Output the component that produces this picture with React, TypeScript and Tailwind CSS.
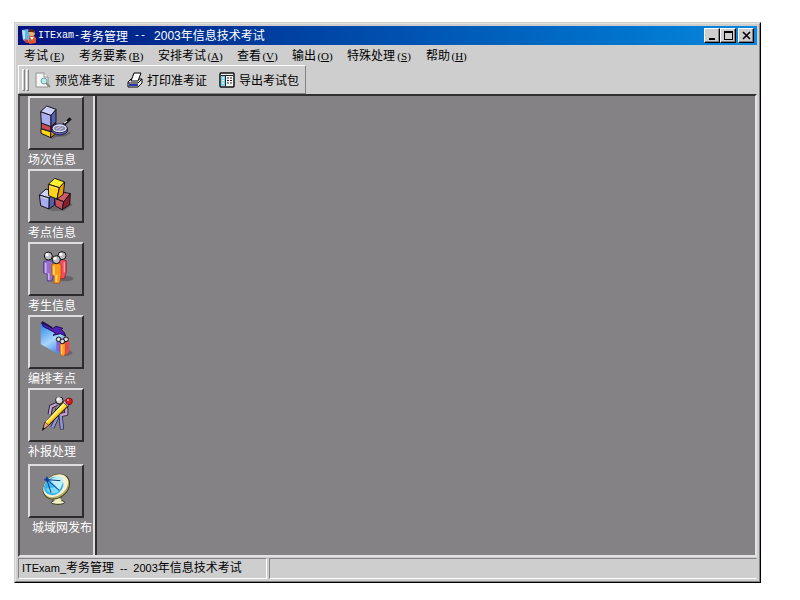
import React from 'react';

interface MenuEntry {
  label: string;
  hotkey: string;
}

interface IconProps {
  className?: string;
}

const menus: MenuEntry[] = [
  { label: '考试', hotkey: 'E' },
  { label: '考务要素', hotkey: 'B' },
  { label: '安排考试', hotkey: 'A' },
  { label: '查看', hotkey: 'V' },
  { label: '输出', hotkey: 'O' },
  { label: '特殊处理', hotkey: 'S' },
  { label: '帮助', hotkey: 'H' },
];

const AppIcon: React.FC<IconProps> = ({ className }) => (
  <svg className={className} viewBox="0 0 16 16" aria-hidden="true">
    <path d="M1 2l6-1 3 4v8l-4 2-4-3z" fill="#5fb4e8" />
    <path d="M1 2l3 1v9l-2-1z" fill="#b9e4fa" />
    <path d="M8 8l4-1 3 3v5l-7 1z" fill="#e0562a" />
    <path d="M3 11l4 1 1 3H5z" fill="#c9403a" />
    <circle cx="11" cy="5" r="3" fill="#f1b06a" />
    <path d="M7 4c0-4 7-4 7 1l-3-1z" fill="#5a2a12" />
    <path d="M9 9l2 3 2-3" fill="#fff" />
  </svg>
);

const PreviewIcon: React.FC<IconProps> = ({ className }) => (
  <svg className={className} viewBox="0 0 16 16" aria-hidden="true">
    <path d="M1 1h8l4 4v10H1z" fill="#f6f6f6" stroke="#909090" />
    <path d="M9 1v4h4" fill="#fff" stroke="#909090" />
    <circle cx="9" cy="9" r="3" fill="#b4eef2" stroke="#7a9a9c" />
    <path d="M11 11l4 4" stroke="#888" strokeWidth="2" />
  </svg>
);

const PrintIcon: React.FC<IconProps> = ({ className }) => (
  <svg className={className} viewBox="0 0 16 16" aria-hidden="true">
    <path d="M1 10l3-3h11v4l-4 4H1z" fill="#f0f0f0" stroke="#000" />
    <path d="M4 9l3-8h7l-3 8z" fill="#fff" stroke="#000" />
    <path d="M1 11h10l4-4" fill="none" stroke="#000" />
    <path d="M2 13h9" stroke="#2a34b0" strokeWidth="2" />
  </svg>
);

const ExportIcon: React.FC<IconProps> = ({ className }) => (
  <svg className={className} viewBox="0 0 16 16" aria-hidden="true">
    <rect x="1" y="1" width="14" height="14" rx="1" fill="#f4f4f4" stroke="#111" strokeWidth="1.500" />
    <path d="M2 3h4v11h-4z" fill="#77d5e8" />
    <path d="M6.500 3v11M2 3.500h12" stroke="#222" />
    <path d="M3 6h2M3 8.500h2M3 11h2" stroke="#fff" />
    <path d="M8 6h2M11 6h2M8 8.500h2M11 8.500h2M8 11h2M11 11h2" stroke="#222" />
  </svg>
);

const SessionIcon: React.FC<IconProps> = ({ className }) => (
  <svg className={className} viewBox="36 33 108 108" aria-hidden="true">
    <path d="M74 131l16-8 28-2 12-8 6 4-18 10-28 2-12 6z" fill="#646264" />
    <g stroke="#14141c" strokeWidth="3" strokeLinejoin="round">
      <path d="M45 104l29 9v18l-29-13z" fill="#ffd414" />
      <path d="M74 113l14-9v17l-14 10z" fill="#d08c00" />
      <path d="M46 86l29 11v16l-29-9z" fill="#c84a52" />
      <path d="M75 97l15-11v17l-15 10z" fill="#8c1c2c" />
      <path d="M44 53l31 11v34l-29-11z" fill="#a9aef0" />
      <path d="M75 64l15-18v38l-15 14z" fill="#5a60b0" />
      <path d="M44 53l18-17 28 10-15 18z" fill="#ccd0fa" />
    </g>
    <path d="M112 93l22-20" stroke="#111" strokeWidth="9" />
    <path d="M114 88l9-7" stroke="#d8d8ec" strokeWidth="4" />
    <ellipse cx="101" cy="108" rx="24" ry="15" fill="#686ca8" stroke="#14144c" strokeWidth="3" />
    <ellipse cx="101" cy="103" rx="23" ry="13" fill="#848284" stroke="#14144c" strokeWidth="3" />
    <ellipse cx="101" cy="103" rx="19" ry="10" fill="#8c8ca0" stroke="#dcdcfc" strokeWidth="4" />
    <path d="M90 105l14-8M97 109l14-8" stroke="#c8caf0" strokeWidth="3" />
  </svg>
);

const SiteIcon: React.FC<IconProps> = ({ className }) => (
  <svg className={className} viewBox="36 33 108 108" aria-hidden="true">
    <path d="M70 127l20-14 18 14 26-18 6 4-26 18H88l-8 2z" fill="#686668" />
    <g stroke="#14141c" strokeWidth="3" strokeLinejoin="round">
      <path d="M40 84l20-18 26 10-16 17z" fill="#ced2fa" />
      <path d="M40 84l30 9-1 33-25-10z" fill="#a7acec" />
      <path d="M70 93l16-17v38l-17 12z" fill="#565ca8" />
      <path d="M86 94l20-20 27 6-20 24z" fill="#d05c64" />
      <path d="M86 94l27 10-4 24-21-11z" fill="#c2505a" />
      <path d="M113 104l20-24-2 33-22 15z" fill="#8c1c28" />
      <path d="M67 52l19-18 30 11-16 17z" fill="#fff02c" />
      <path d="M67 52l33 10-7 34-25-10z" fill="#ffd21c" />
      <path d="M100 62l16-17-4 37-19 14z" fill="#e89c00" />
    </g>
    <path d="M72 58l24 7M46 90l20 6" stroke="#fff7c4" strokeWidth="3" opacity="0.6" />
  </svg>
);

const CandidateIcon: React.FC<IconProps> = ({ className }) => (
  <svg className={className} viewBox="72 46 108 108" aria-hidden="true">
    <ellipse cx="154" cy="129" rx="24" ry="8" fill="#646264" />
    <path d="M89 78q14-9 28 0v46l-3 12h-14v-20l-11-4z" fill="#9470cc" stroke="#3c2372" strokeWidth="2" />
    <path d="M95 82v31M104 113v20" stroke="#c8b2ec" strokeWidth="5" />
    <path d="M133 75q13-7 24 0v34l-6 20h-13z" fill="#f04c64" stroke="#88182c" strokeWidth="2" />
    <path d="M151 80v30" stroke="#ffa0a4" strokeWidth="4" />
    <path d="M113 86q14-9 28 0v34l-4 23h-17v-22l-7-3z" fill="#ff9a16" stroke="#a34310" strokeWidth="2" />
    <path d="M120 91v26M127 117v22" stroke="#ffd26c" strokeWidth="6" />
    <g fill="#bdbdc1" stroke="#111" strokeWidth="3">
      <circle cx="103" cy="61" r="12" />
      <circle cx="144" cy="60" r="12" />
      <circle cx="127" cy="72" r="12" />
    </g>
    <g fill="#fff">
      <circle cx="99" cy="57" r="5" />
      <circle cx="140" cy="56" r="5" />
      <circle cx="123" cy="68" r="5" />
    </g>
  </svg>
);

const ArrangeIcon: React.FC<IconProps> = ({ className }) => (
  <svg className={className} viewBox="36 33 108 108" overflow="visible" aria-hidden="true">
    <defs>
      <linearGradient id="folder" x1="0" y1="0" x2="0.5" y2="1">
        <stop offset="0" stopColor="#2a84ec" />
        <stop offset="0.6" stopColor="#a8d6fc" />
        <stop offset="1" stopColor="#4a90ec" />
      </linearGradient>
    </defs>
    <path d="M112 128l20-16 8 8-14 9z" fill="#646264" />
    <path d="M44 33l70 30-7 65-63-34z" fill="url(#folder)" />
    <path d="M44 30l6-5 30 18-3 5-25-11z" fill="#14104c" />
    <path d="M50 30l30 17 10-7 20 6-4 4 9 9 4 10-16-7-22 5 8-7-38-20z" fill="#5020b8" stroke="#180c50" strokeWidth="3" strokeLinejoin="round" />
    <path d="M91 86q6-4 12 0v33l-12-6z" fill="#8c60d4" />
    <path d="M117 87q8-5 13 0v28l-6 10-7-4z" fill="#e84650" />
    <path d="M102 92q7-5 16 0v28l-3 9h-9l-4-8z" fill="#ff9a2c" stroke="#b05014" strokeWidth="2" />
    <path d="M107 96v26" stroke="#ffd06a" strokeWidth="4" />
    <g fill="#dcdce0" stroke="#111" strokeWidth="3">
      <circle cx="98" cy="79" r="7" />
      <circle cx="120" cy="79" r="7" />
      <circle cx="109" cy="85" r="7" />
    </g>
  </svg>
);

const SupplementIcon: React.FC<IconProps> = ({ className }) => (
  <svg className={className} viewBox="72 49 108 108" aria-hidden="true">
    <g strokeLinejoin="round" fill="none">
      <path d="M128 70l-17 8-4 23M129 83v28l-14 30M140 105l4 41M135 76l22 8v16l-20 3" stroke="#15152c" strokeWidth="12" />
      <path d="M128 70l-17 8-4 23M135 76l22 8v16l-20 3" stroke="#c9a2d4" strokeWidth="7" />
      <path d="M129 83v28l-14 30M140 105l4 40" stroke="#9094d8" strokeWidth="8" />
    </g>
    <circle cx="136" cy="59" r="11" fill="#d2d2d2" stroke="#111" strokeWidth="3" />
    <circle cx="132" cy="55" r="5" fill="#fff" />
    <path d="M150 62l15 12-62 61-17 13 7-23z" fill="#ffdc28" stroke="#111" strokeWidth="3" />
    <path d="M154 67l-58 57" stroke="#fff7a4" strokeWidth="4" />
    <path d="M161 74l-59 58" stroke="#ca8916" strokeWidth="3" />
    <path d="M93 124l11 10-18 14z" fill="#e3a288" stroke="#542c20" strokeWidth="2" />
    <path d="M88 139l5 4-9 8z" fill="#111" />
    <path d="M147 65l7-7 14 13-7 6z" fill="#c2c2c8" stroke="#111" strokeWidth="2" />
    <circle cx="165" cy="62" r="10" fill="#da1a20" stroke="#5c060c" strokeWidth="2" />
    <circle cx="162" cy="58" r="3" fill="#ffaaa6" />
  </svg>
);

const PublishIcon: React.FC<IconProps> = ({ className }) => (
  <svg className={className} viewBox="72 279 108 108" aria-hidden="true">
    <path d="M124 350h17v14h-17z" fill="#d9d5a2" stroke="#45431c" strokeWidth="2" />
    <ellipse cx="132" cy="367" rx="20" ry="6" fill="#f4f2cd" stroke="#35340f" strokeWidth="3" />
    <path d="M120 359q11-7 23 0l-3 7h-17z" fill="#efecbd" />
    <ellipse cx="127" cy="320" rx="43" ry="33" fill="#b2ac70" stroke="#45431c" strokeWidth="3" transform="rotate(-38 127 320)" />
    <ellipse cx="125" cy="317" rx="41" ry="30" fill="#f5f1cc" transform="rotate(-38 125 317)" />
    <ellipse cx="119" cy="318" rx="31" ry="26" fill="#38b4f2" transform="rotate(-38 119 318)" />
    <path d="M108 300c12-10 30-14 38-6 4 10-3 26-10 35z" fill="#bdeffd" />
    <path d="M96 326c10 16 28 18 40 6l-11-11z" fill="#79dcf8" />
    <path d="M96 296l40 36M98 299l41 3M99 301l12 37" stroke="#123b78" strokeWidth="3" />
    <path d="M91 298l15 3M99 290v15" stroke="#0b3ba8" strokeWidth="5" />
  </svg>
);

const tools = [
  { label: '预览准考证', Icon: PreviewIcon },
  { label: '打印准考证', Icon: PrintIcon },
  { label: '导出考试包', Icon: ExportIcon },
];

const sideItems = [
  { label: '场次信息', Icon: SessionIcon },
  { label: '考点信息', Icon: SiteIcon },
  { label: '考生信息', Icon: CandidateIcon },
  { label: '编排考点', Icon: ArrangeIcon },
  { label: '补报处理', Icon: SupplementIcon },
  { label: '城域网发布', Icon: PublishIcon, wide: true },
];

const captionButton =
  'flex h-[15px] w-4 items-center justify-center border border-t-white border-l-white border-r-black border-b-black bg-[#cecece] shadow-[inset_-1px_-1px_0_#848284]';

const TitleBar: React.FC = () => (
  <header className="flex h-[19px] items-center bg-linear-to-r from-[#04107f] to-[#0e88de] pr-[3px] pl-[3px] text-white">
    <AppIcon className="h-4 w-4 shrink-0" />
    <h1 className="ml-px flex flex-1 items-center text-xs whitespace-pre">
      <span className="font-['Liberation_Mono',monospace] text-[10px]">ITExam-</span>
      考务管理
      <span className="mx-1.5 font-['Liberation_Mono',monospace] text-[10px]">--</span>
      <span className="ml-[2px] font-['Liberation_Sans','Noto_Sans_CJK_SC',sans-serif]">2003年信息技术考试</span>
    </h1>
    <div className="flex">
      <button type="button" aria-label="最小化" className={captionButton}>
        <svg className="h-[9px] w-[9px]" viewBox="0 0 9 9"><path d="M1 7h6v2H1z" /></svg>
      </button>
      <button type="button" aria-label="最大化" className={captionButton}>
        <svg className="h-[9px] w-[9px]" viewBox="0 0 9 9"><path d="M0 0h9v9H0zM1 2v6h7V2z" fillRule="evenodd" /></svg>
      </button>
      <button type="button" aria-label="关闭" className={`ml-[2px] ${captionButton}`}>
        <svg className="h-[9px] w-[9px]" viewBox="0 0 9 9"><path d="M1 1l7 7M8 1L1 8" stroke="#000" strokeWidth="1.600" /></svg>
      </button>
    </div>
  </header>
);

const MenuBar: React.FC = () => (
  <nav className="flex h-5 items-center gap-[13px] pl-1.5">
    {menus.map(({ label, hotkey }) => (
      <button key={label} type="button" className="flex items-baseline">
        {label}
        <span className="w-[18px] text-center font-['Liberation_Serif',serif] text-[11px]">
          (<span className="underline">{hotkey}</span>)
        </span>
      </button>
    ))}
  </nav>
);

const Toolbar: React.FC = () => (
  <div className="flex h-[29px] items-center self-start border border-t-white border-l-white border-r-[#848284] border-b-[#848284] pr-1.5 pl-[3px]">
    <div className="mr-1.5 flex gap-px">
      <div className="h-[22px] w-[3px] border border-t-white border-l-white border-r-[#848284] border-b-[#848284]" />
      <div className="h-[22px] w-[3px] border border-t-white border-l-white border-r-[#848284] border-b-[#848284]" />
    </div>
    <div className="flex gap-3">
      {tools.map(({ label, Icon }) => (
        <button key={label} type="button" className="flex items-center gap-[4px]">
          <Icon className="h-4 w-4" />
          {label}
        </button>
      ))}
    </div>
  </div>
);

const Sidebar: React.FC = () => (
  <aside className="flex w-[73px] shrink-0 flex-col pl-2 text-white">
    {sideItems.map(({ label, Icon, wide }) => (
      <button key={label} type="button" className={`flex flex-col items-start ${wide ? 'mt-[3px]' : ''}`}>
        <span className="flex h-[54px] w-14 items-center justify-center border-2 border-t-[#dedede] border-l-[#dedede] border-r-[#2c2c2c] border-b-[#2c2c2c]">
          <Icon className="h-9 w-9" />
        </span>
        <span className={`h-[19px] leading-[18px] whitespace-nowrap ${wide ? 'pl-1' : ''}`}>{label}</span>
      </button>
    ))}
  </aside>
);

const StatusBar: React.FC = () => (
  <footer className="mt-px flex h-[21px] gap-[2px] leading-[19px]">
    <div className="flex w-[249px] items-center border border-t-[#848284] border-l-[#848284] border-r-white border-b-white pl-[3px] font-['Liberation_Sans','Noto_Sans_CJK_SC',sans-serif]">
      <span className="text-[11px]">ITExam_</span>
      考务管理
      <span className="mx-1.5 text-[11px]">--</span>
      <span className="text-[11px]">2003</span>
      年信息技术考试
    </div>
    <div className="flex-1 border border-t-[#848284] border-l-[#848284] border-r-[#cecece] border-b-white" />
  </footer>
);

export default function App() {
  return (
    <div className="flex min-h-screen bg-white pt-[22px] pr-[39px] pb-[17px] pl-[14px] font-['Noto_Sans_CJK_SC',sans-serif] text-xs text-black">
      <div className="flex flex-1 border border-t-[#cecece] border-l-[#cecece] border-r-black border-b-black">
        <div className="flex flex-1 flex-col border border-t-[#e4e4dc] border-l-[#e4e4dc] border-r-[#848284] border-b-[#848284] bg-[#cecece] p-[2px]">
          <TitleBar />
          <MenuBar />
          <Toolbar />
          <div className="flex flex-1 border-2 border-t-[#303030] border-l-[#484848] border-r-[#e2e2e2] border-b-[#e2e2e2] bg-[#848284]">
            <Sidebar />
            <div className="w-[2px] bg-[#dedede]" />
            <main className="flex-1 border-l-2 border-l-[#303030]" />
          </div>
          <StatusBar />
        </div>
      </div>
    </div>
  );
}
